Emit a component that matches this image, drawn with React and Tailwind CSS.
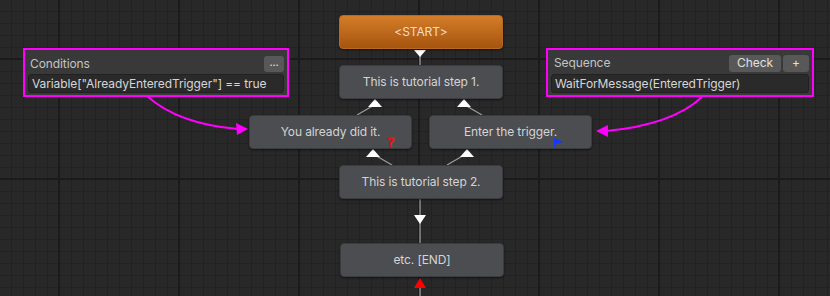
export default function App() {
  const nodeCls =
    "absolute h-[34px] rounded-[4px] bg-[#4b4d51] border border-[#3b3c3f] shadow-[0_1px_2px_rgba(0,0,0,0.5)] flex items-center justify-center text-[12px] tracking-[-0.1px] text-[#d4d4d4] whitespace-nowrap";
  return (
    <div className="relative w-[830px] h-[296px] overflow-hidden bg-[#282828] font-['Inter',sans-serif] [background-image:linear-gradient(to_right,#1b1b1b_2px,transparent_2px),linear-gradient(to_bottom,#1b1b1b_2px,transparent_2px),linear-gradient(to_right,#222222_1px,transparent_1px),linear-gradient(to_bottom,#222222_1px,transparent_1px)] [background-size:120px_120px,120px_120px,12px_12px,12px_12px] [background-position:58px_0,0_178px,11px_0,0_11px]">
      {/* edges */}
      <svg className="absolute inset-0" width="830" height="296" viewBox="0 0 830 296">
        <g stroke="#9c9c9c" strokeWidth="1.3" fill="none">
          <line x1="420" y1="56" x2="420" y2="65" />
          <line x1="357" y1="115" x2="376" y2="104" />
          <line x1="482" y1="115" x2="463" y2="104" />
          <line x1="392" y1="165" x2="373" y2="154" />
          <line x1="447" y1="165" x2="466" y2="154" />
          <line x1="420" y1="199" x2="420" y2="243" />
          <line x1="420" y1="288" x2="420" y2="296" />
        </g>
        <g fill="#ffffff">
          <polygon points="414,50 426,50 420,57" />
          <polygon points="375,99 368,107 382,107" />
          <polygon points="464,99 457,107 471,107" />
          <polygon points="373,149 366,157 380,157" />
          <polygon points="467,149 460,157 474,157" />
          <polygon points="414,215 426,215 420,224" />
        </g>
        <polygon points="420,278 414,288 426,288" fill="#ff0000" />
        {/* magenta links */}
        <path d="M147 96 Q 178 124 238 129" stroke="#ff00ff" strokeWidth="2" fill="none" />
        <polygon points="248,129 236,123 237,135" fill="#ff00ff" />
        <path d="M702 97 Q 672 125 606 131" stroke="#ff00ff" strokeWidth="2" fill="none" />
        <polygon points="596,131 608,125 608,137" fill="#ff00ff" />
      </svg>

      {/* nodes */}
      <div className="absolute left-[339px] top-[15px] w-[164px] h-[34px] rounded-[4px] bg-[linear-gradient(to_bottom,#d47d28,#a6540f)] border border-[#b86a22] flex items-center justify-center text-[12px] tracking-[-0.1px] text-[#f2dcc6] shadow-[0_1px_2px_rgba(0,0,0,0.5)]">
        &lt;START&gt;
      </div>
      <div className={nodeCls + " left-[339px] top-[65px] w-[164px]"}>This is tutorial step 1.</div>
      <div className={nodeCls + " left-[249px] top-[115px] w-[163px]"}>
        You already did it.
        <span className="absolute left-[137px] top-[20px] text-[13px] font-black leading-none text-[#ee1111]">?</span>
      </div>
      <div className={nodeCls + " left-[429px] top-[115px] w-[163px]"}>
        Enter the trigger.
        <svg className="absolute left-[124px] top-[22px]" width="9" height="9" viewBox="0 0 9 9">
          <polygon points="0,0 9,4 2,6 2,9 0,9" fill="#1438ff" />
        </svg>
      </div>
      <div className={nodeCls + " left-[339px] top-[165px] w-[164px]"}>This is tutorial step 2.</div>
      <div className={nodeCls + " left-[340px] top-[243px] w-[164px]"}>etc. [END]</div>

      {/* Conditions panel */}
      <div className="absolute left-[23px] top-[48px] w-[266px] h-[49px] border-2 border-[#ff00ff] bg-[#393939] px-[3px] pt-[5px] flex flex-col gap-[2px] text-[12px] tracking-[-0.1px] whitespace-nowrap">
        <div className="flex items-center justify-between h-[17px] pl-[2px]">
          <span className="text-[#c4c4c4]">Conditions</span>
          <span className="w-[20px] h-[16px] rounded-[3px] bg-[#585858] text-[#e0e0e0] text-[11px] leading-none flex items-center justify-center pb-[3px]">...</span>
        </div>
        <div className="h-[19px] rounded-[3px] bg-[#2a2a2a] border border-[#212121] flex items-center px-[3px] text-[#d6d6d6]">
          Variable["AlreadyEnteredTrigger"] == true
        </div>
      </div>

      {/* Sequence panel */}
      <div className="absolute left-[546px] top-[48px] w-[268px] h-[49px] border-2 border-[#ff00ff] bg-[#393939] px-[3px] pt-[4px] flex flex-col gap-[2px] text-[12px] tracking-[-0.1px] whitespace-nowrap">
        <div className="flex items-center h-[18px] pl-[3px]">
          <span className="text-[#c4c4c4] flex-1">Sequence</span>
          <span className="w-[52px] h-[17px] rounded-[3px] bg-[#585858] text-[#e0e0e0] flex items-center justify-center">Check</span>
          <span className="ml-[2px] w-[26px] h-[17px] rounded-[3px] bg-[#585858] text-[#e0e0e0] flex items-center justify-center">+</span>
        </div>
        <div className="h-[19px] rounded-[3px] bg-[#2a2a2a] border border-[#212121] flex items-center px-[3px] text-[#d6d6d6]">
          WaitForMessage(EnteredTrigger)
        </div>
      </div>
    </div>
  );
}
